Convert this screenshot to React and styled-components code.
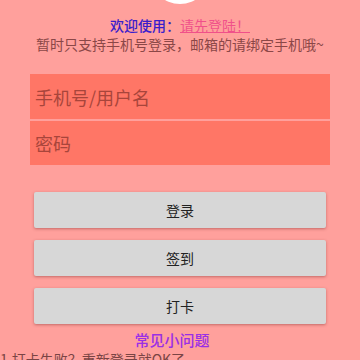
import React from "react";
import styled, { createGlobalStyle } from "styled-components";

const Global = createGlobalStyle`
  html, body { margin: 0; padding: 0; background: #ffa09c; overflow: hidden; }
  body { font-family: "Noto Sans CJK SC", "Noto Sans", sans-serif; }
`;

const Page = styled.div`
  width: 360px;
  height: 360px;
  display: flex;
  flex-direction: column;
  background: #ffa09c;
  overflow: hidden;
`;

const Avatar = styled.div`
  width: 60px;
  height: 60px;
  border-radius: 50%;
  background: #fff;
  margin: -56px auto 0;
  flex-shrink: 0;
`;

const Welcome = styled.div`
  margin-top: 12px;
  text-align: center;
  font-size: 14px;
  line-height: 19px;
`;

const Hello = styled.span`
  color: #3a1dcc;
  font-weight: 500;
`;

const LoginLink = styled.a`
  color: #f0508a;
  text-decoration: underline;
`;

const Notice = styled.div`
  text-align: center;
  font-size: 14px;
  line-height: 19px;
  color: #8b4747;
`;

const Form = styled.div`
  margin: 20px 30px 0;
  display: flex;
  flex-direction: column;
  gap: 2px;
`;

const Field = styled.input`
  box-sizing: border-box;
  width: 100%;
  height: ${(p) => p.$h}px;
  border: none;
  outline: none;
  background: #ff7666;
  padding: 0 5px;
  font-family: "Noto Sans CJK SC", "Noto Sans", sans-serif;
  font-size: 18px;
  color: #6d2a24;
  &::placeholder { color: #a8453b; }
`;

const Buttons = styled.div`
  margin: 27px 34px 0;
  display: flex;
  flex-direction: column;
  gap: 12px;
`;

const Button = styled.button`
  height: 36px;
  border: none;
  border-radius: 2px;
  background: #d7d7d7;
  box-shadow: 0 1px 3px rgba(120, 40, 40, 0.45);
  font-family: "Noto Sans CJK SC", "Noto Sans", sans-serif;
  font-size: 14px;
  color: #222;
  padding: 0;
`;

const FaqTitle = styled.div`
  margin-top: 6px;
  padding-right: 16px;
  text-align: center;
  font-size: 15px;
  line-height: 20px;
  font-weight: 500;
  color: #9a2fe6;
`;

const FaqItem = styled.div`
  font-size: 14px;
  line-height: 19px;
  color: #7a4444;
  white-space: nowrap;
`;

export default function App() {
  return (
    <>
      <Global />
      <Page>
        <Avatar />
        <Welcome>
          <Hello>欢迎使用：</Hello>
          <LoginLink>请先登陆！</LoginLink>
        </Welcome>
        <Notice>暂时只支持手机号登录，邮箱的请绑定手机哦~</Notice>
        <Form>
          <Field $h={45} placeholder="手机号/用户名" />
          <Field $h={44} type="password" placeholder="密码" />
        </Form>
        <Buttons>
          <Button>登录</Button>
          <Button>签到</Button>
          <Button>打卡</Button>
        </Buttons>
        <FaqTitle>常见小问题</FaqTitle>
        <FaqItem>1.打卡失败？重新登录就OK了</FaqItem>
      </Page>
    </>
  );
}
